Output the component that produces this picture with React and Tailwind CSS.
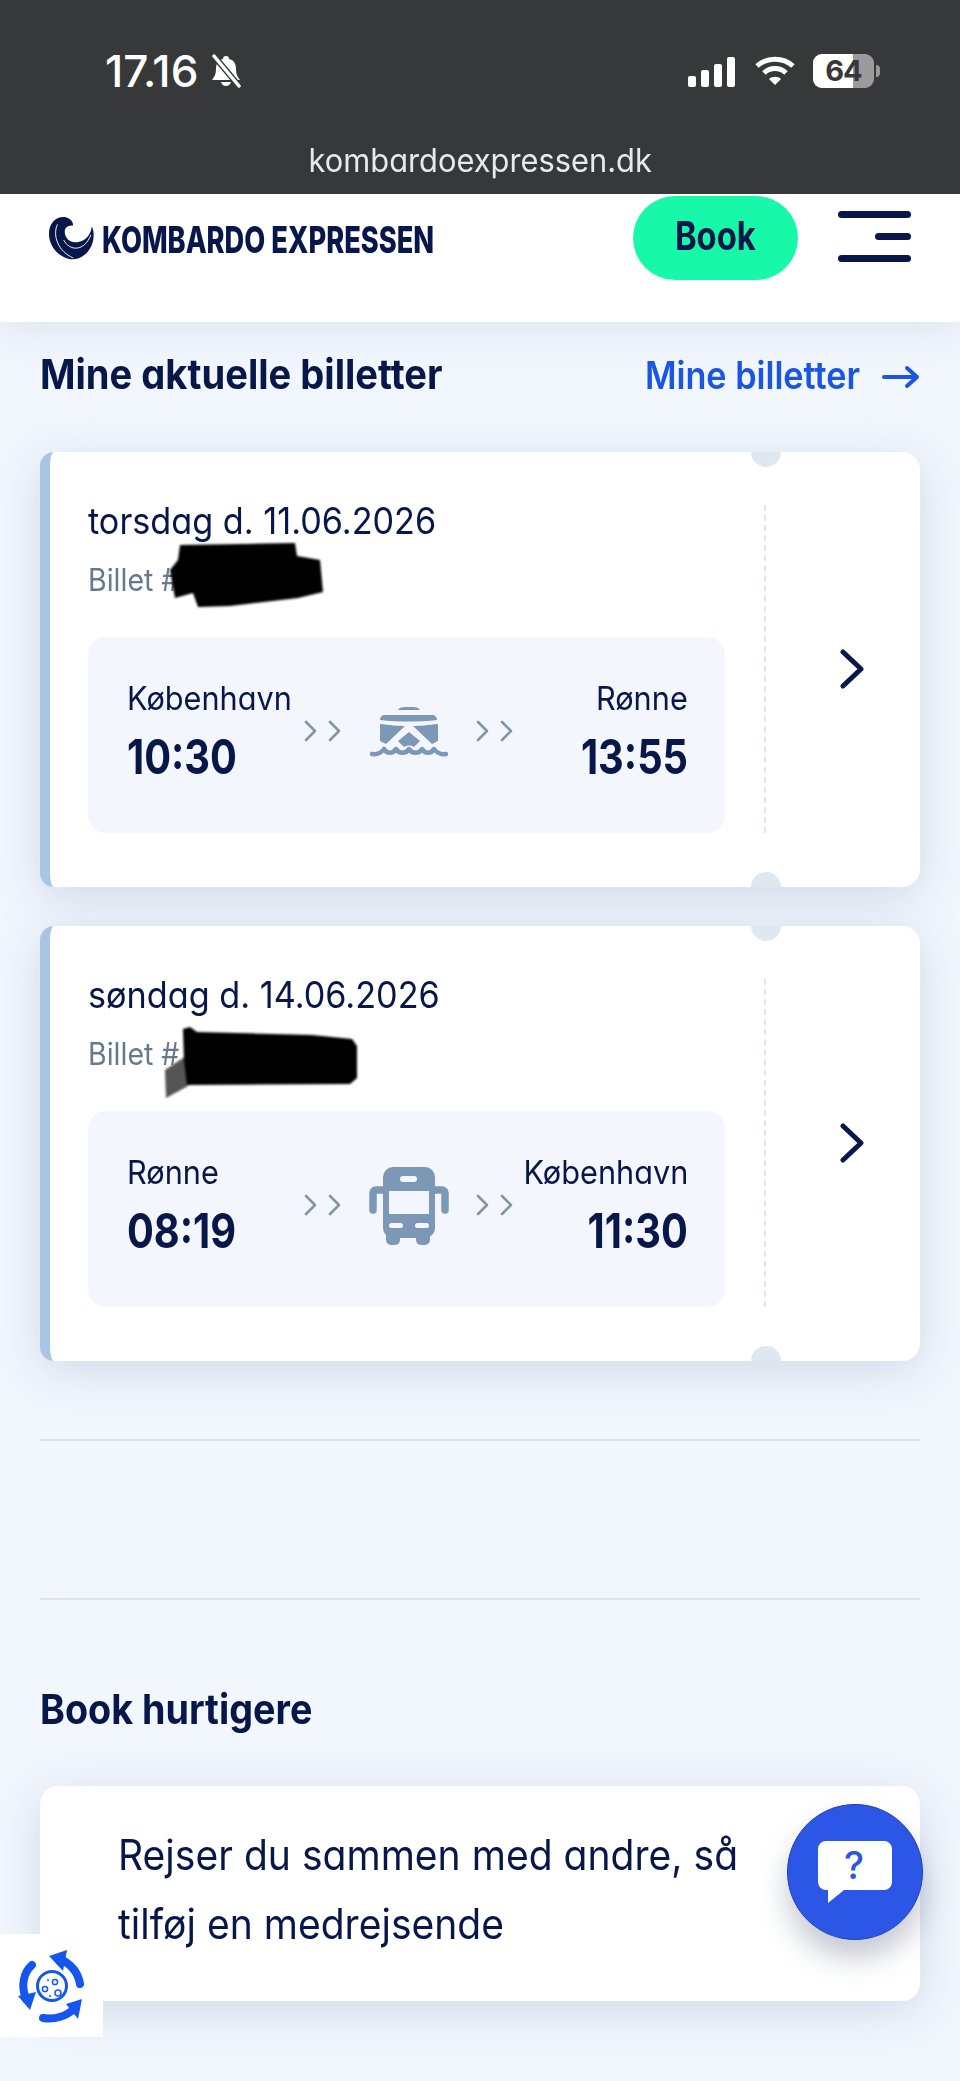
import React from 'react';

function Chevrons() {
  return (
    <svg width="40" height="24" viewBox="0 0 40 24" fill="none" stroke="#8493a6" strokeWidth="2.6" strokeLinecap="round" strokeLinejoin="round">
      <path d="M3 3l9 9-9 9" />
      <path d="M27 3l9 9-9 9" />
    </svg>
  );
}

function Ferry() {
  return (
    <svg width="80" height="54" viewBox="0 0 80 54" fill="#7d97b6">
      <path d="M29 5c2-3 4-3 11-3s9 0 11 3z" />
      <path d="M11 15c0-3 2-5 5-5h47c3 0 5 2 5 5-18 2-39 2-57 0z" />
      <path d="M11 19c9 1 19 2 25 2L17 39l-6-3zM69 19c-9 1-19 2-25 2l19 18 6-3z" />
      <path d="M40 27l11 9-6 6c-3-2-7-2-10 0l-6-6z" />
      <path d="M3 49c6 1 9-1 12-5 3 5 9 5 12 0 3 5 10 5 13 0 3 5 10 5 13 0 3 5 9 5 12 0 3 4 6 6 12 5" fill="none" stroke="#7d97b6" strokeWidth="4.5" strokeLinecap="round" strokeLinejoin="round" />
    </svg>
  );
}

function Bus() {
  return (
    <svg width="80" height="80" viewBox="0 0 80 80" fill="#7d97b6">
      <rect x="14" y="1" width="52" height="71" rx="10" />
      <rect x="17" y="58" width="14" height="21" rx="5" />
      <rect x="47" y="58" width="14" height="21" rx="5" />
      <path d="M15 24H7a3 3 0 0 0-3 3v17M65 24h8a3 3 0 0 1 3 3v17" fill="none" stroke="#7d97b6" strokeWidth="7.5" strokeLinecap="round" />
      <rect x="20" y="25" width="40" height="23" fill="#f3f7fd" />
      <rect x="31" y="10" width="17" height="6" rx="3" fill="#f3f7fd" />
      <rect x="20" y="57" width="14" height="5" rx="2.5" fill="#f3f7fd" />
      <rect x="46" y="57" width="14" height="5" rx="2.5" fill="#f3f7fd" />
    </svg>
  );
}

function Notch({ pos }) {
  return pos === 'top' ? (
    <span className="absolute left-[701px] top-[-15px] w-[30px] h-[30px] rounded-full bg-[#dfe7f1]" />
  ) : (
    <span className="absolute left-[701px] bottom-[-15px] w-[30px] h-[30px] rounded-full bg-[#dfe7f1]" />
  );
}

function Ticket({ date, from, to, dep, arr, icon, blob }) {
  return (
    <div className="relative h-[435px] flex border-l-[10px] border-[#a8c6e4] rounded-l-[14px] rounded-r-[18px] bg-white shadow-[0_10px_44px_rgba(170,186,210,0.45)] overflow-hidden">
      <Notch pos="top" />
      <Notch pos="bottom" />
      <div className="w-[678px] shrink-0 pl-[38px] pt-[46px]">
        <div className="h-[46px] flex items-center text-[37px] text-[#08174a] whitespace-nowrap"><span className="inline-block origin-left scale-x-[0.925]">{date}</span></div>
        <div className="h-[40px] mt-[16px] flex items-center text-[31px] text-[#67798f] whitespace-nowrap"><span className="inline-block origin-left scale-x-[0.92]">Billet #</span></div>
        <div className="mt-[37px] w-[637px] h-[196px] rounded-[18px] bg-[#f3f7fd] pl-[39px] pr-[37px] flex items-start">
          <div className="w-[170px] shrink-0 pt-[42px]">
            <div className="h-[40px] flex items-center text-[33px] text-[#08174a] whitespace-nowrap"><span className="inline-block origin-left scale-x-[0.93]">{from}</span></div>
            <div className="h-[52px] mt-[12px] flex items-center text-[48px] font-bold text-[#08174a] whitespace-nowrap"><span className="inline-block origin-left scale-x-[0.83]">{dep}</span></div>
          </div>
          <div className="shrink-0 ml-[6px] flex items-center h-full">
            <div className="mt-[-9px]"><Chevrons /></div>
            <div className="ml-[26px] w-[80px] flex justify-center mt-[-6px]">{icon}</div>
            <div className="ml-[26px] mt-[-9px]"><Chevrons /></div>
          </div>
          <div className="flex-1 min-w-0 pt-[42px] text-right">
            <div className="h-[40px] flex items-center justify-end text-[33px] text-[#08174a] whitespace-nowrap"><span className="inline-block origin-right scale-x-[0.93]">{to}</span></div>
            <div className="h-[52px] mt-[12px] flex items-center justify-end text-[48px] font-bold text-[#08174a] whitespace-nowrap"><span className="inline-block origin-right scale-x-[0.83]">{arr}</span></div>
          </div>
        </div>
      </div>
      <div className="w-[48px] shrink-0 flex justify-start">
        <div className="ml-[36px] mt-[53px] h-[328px] border-l-2 border-dashed border-[#e1e6ec]" />
      </div>
      <div className="flex-1 flex items-start">
        <svg className="ml-[64px] mt-[197px]" width="24" height="40" viewBox="0 0 24 40" fill="none" stroke="#08174a" strokeWidth="5" strokeLinecap="round" strokeLinejoin="round">
          <path d="M3 3l18 17L3 37" />
        </svg>
      </div>
      {blob}
    </div>
  );
}

export default function App() {
  return (
    <div className="relative w-full h-[2081px] overflow-hidden bg-[#f2f6fd] font-['Inter','Noto_Sans',sans-serif] [font-feature-settings:'cv11']">
      <div className="h-[194px] bg-[#37383a] relative z-10">
        <div className="h-[50px] pt-[54px] box-content flex items-start justify-between pl-[105px] pr-[80px]">
          <div className="flex items-center">
            <div className="w-[94px] h-[34px] flex items-center text-[44px] font-medium text-white whitespace-nowrap"><span className="inline-block origin-left">17.16</span></div>
            <svg className="ml-[10px]" width="34" height="34" viewBox="0 0 34 34" fill="white">
              <path d="M17 2c2 0 3 1 3 3 5 1 7 5 7 10 0 6 2 8 4 11H3c2-3 4-5 4-11 0-5 2-9 7-10 0-2 1-3 3-3z" />
              <path d="M12 28h10c-1 3-3 4-5 4s-4-1-5-4z" />
              <path d="M5 2l25 30" stroke="#37383a" strokeWidth="6" />
              <path d="M5 2l25 30" stroke="white" strokeWidth="3.5" strokeLinecap="round" />
            </svg>
          </div>
          <div className="flex items-center">
            <div className="flex items-end gap-[5px] h-[30px] mt-[2px]">
              <span className="w-[8px] h-[11px] rounded-[2px] bg-white" />
              <span className="w-[8px] h-[17px] rounded-[2px] bg-white" />
              <span className="w-[8px] h-[23px] rounded-[2px] bg-white" />
              <span className="w-[8px] h-[30px] rounded-[2px] bg-white" />
            </div>
            <svg className="ml-[20px]" width="40" height="30" viewBox="0 0 40 30" fill="none" stroke="white" strokeWidth="5">
              <path d="M2 10c10-9 26-9 36 0" />
              <path d="M9 17c6-6 16-6 22 0" />
              <path d="M20 29l-6-6c3-3 9-3 12 0z" fill="white" stroke="none" />
            </svg>
            <div className="ml-[18px] relative w-[61px] h-[34px] rounded-[9px] bg-[#9b9b9d] overflow-hidden">
              <div className="w-[40px] h-full bg-white" />
              <div className="absolute inset-0 flex items-center justify-center text-[29px] font-bold text-[#37383a] tracking-[-1px]">64</div>
            </div>
            <div className="ml-[2px] w-[4px] h-[12px] rounded-r-full bg-[#9b9b9d]" />
          </div>
        </div>
        <div className="h-[40px] mt-[37px] flex items-center justify-center text-[32px] text-[#e9e9e9] whitespace-nowrap"><span className="inline-block scale-x-[0.963]">kombardoexpressen.dk</span></div>
      </div>

      <header className="relative h-[128px] bg-white shadow-[0_8px_36px_rgba(190,200,220,0.4)] flex items-start">
        <div className="ml-[48px] mt-[21px] flex items-center">
          <svg width="46" height="44" viewBox="0 0 44 42" fill="#08174a">
            <path d="M16 1C7 0 0 8 1 19c1 10 8 19 19 22 10 2 20-5 23-17 1-5 1-10-1-14-1 8-6 14-14 15-7 1-12-4-12-10 0-5 4-6 8-6 0-4-3-7-8-8z" />
            <path d="M9 8C4 19 10 34 24 40M15 23c6 11 20 11 26-5" fill="none" stroke="white" strokeWidth="0.9" />
          </svg>
          <div className="ml-[8px] mt-[4px] w-[330px] h-[42px] flex items-center text-[37px] font-extrabold text-[#08174a] whitespace-nowrap"><span className="inline-block origin-left scale-x-[0.735]">KOMBARDO EXPRESSEN</span></div>
        </div>
        <div className="ml-auto mt-[2px] w-[165px] h-[84px] rounded-[42px] bg-[#17f9a8] text-[40px] font-bold text-[#08174a] flex justify-center items-start pt-[10px]"><span className="inline-block scale-x-[0.82]">Book</span></div>
        <div className="ml-[40px] mr-[49px] mt-[17px] w-[73px] flex flex-col items-end gap-[15px]">
          <span className="w-full h-[7px] rounded-full bg-[#08174a]" />
          <span className="w-[36px] h-[7px] rounded-full bg-[#08174a]" />
          <span className="w-full h-[7px] rounded-full bg-[#08174a]" />
        </div>
      </header>

      <main className="px-[40px]">
        <div className="h-[50px] mt-[28px] flex items-center justify-between">
          <div className="text-[41px] font-bold text-[#08174a] whitespace-nowrap"><span className="inline-block origin-left scale-x-[0.93]">Mine aktuelle billetter</span></div>
          <div className="flex items-center text-[38px] font-semibold text-[#1a55e3] whitespace-nowrap">
            <span className="inline-block origin-right scale-x-[0.9]">Mine billetter</span>
            <svg className="ml-[22px] mt-[4px]" width="38" height="24" viewBox="0 0 38 24" fill="none" stroke="#1a55e3" strokeWidth="4" strokeLinecap="round" strokeLinejoin="round">
              <path d="M2 12h33M25 3l10 9-10 9" />
            </svg>
          </div>
        </div>

        <div className="mt-[52px] flex flex-col gap-[39px]">
          <Ticket
            date="torsdag d. 11.06.2026"
            from="København"
            to="Rønne"
            dep="10:30"
            arr="13:55"
            icon={<Ferry />}
            blob={
              <svg className="absolute left-[120px] top-[88px] blur-[1px]" width="160" height="72" viewBox="0 0 160 72" fill="#000">
                <path d="M10 5l115-2 2 13 23 4 3 32-25 6-68 8-32 1-5-14-18 5-5-28 8-10z" />
              </svg>
            }
          />
          <Ticket
            date="søndag d. 14.06.2026"
            from="Rønne"
            to="København"
            dep="08:19"
            arr="11:30"
            icon={<Bus />}
            blob={
              <svg className="absolute left-[112px] top-[100px] blur-[1px]" width="210" height="76" viewBox="0 0 210 76" fill="#000">
                <path d="M3 44l21-14 2 30-22 12z" fill="#555" />
                <path d="M21 3l7-2 7 5 115 3 40 4 5 7v32l-7 6-163 1-3-24z" />
              </svg>
            }
          />
        </div>

        <div className="mt-[78px] h-[2px] bg-[#dbe5f2]" />
        <div className="mt-[157px] h-[2px] bg-[#dbe5f2]" />

        <div className="mt-[86px] h-[48px] flex items-center text-[41px] font-bold text-[#08174a] whitespace-nowrap"><span className="inline-block origin-left scale-x-[0.92]">Book hurtigere</span></div>

        <div className="mt-[52px] h-[215px] rounded-[18px] bg-white shadow-[0_10px_44px_rgba(170,186,210,0.45)] pl-[78px] pt-[34px] text-[42px] leading-[69px] text-[#08174a] whitespace-nowrap">
          <div><span className="inline-block origin-left scale-x-[0.93]">Rejser du sammen med andre, så</span></div>
          <div><span className="inline-block origin-left scale-x-[0.93]">tilføj en medrejsende</span></div>
        </div>
      </main>

      <button className="absolute left-[787px] top-[1804px] w-[136px] h-[136px] rounded-full bg-[#2c57e6] border border-[#1f3fb5] shadow-[0_18px_28px_rgba(90,100,130,0.35)] flex items-center justify-center">
        <svg width="76" height="64" viewBox="0 0 76 64">
          <path d="M9 1h58a8 8 0 0 1 8 8v33a8 8 0 0 1-8 8H27L11 63V50H9a8 8 0 0 1-8-8V9a8 8 0 0 1 8-8z" fill="white" />
          <text x="37" y="39" textAnchor="middle" fontSize="38" fontFamily="Inter" fontWeight="500" fill="#2c57e6">?</text>
        </svg>
      </button>

      <div className="absolute left-0 top-[1934px] w-[103px] h-[103px] bg-white flex items-center justify-center">
        <svg width="80" height="80" viewBox="0 0 80 80" fill="none">
          <circle cx="40" cy="40" r="14.5" stroke="#1557ee" strokeWidth="3" />
          <circle cx="33" cy="43" r="2.6" stroke="#1557ee" strokeWidth="1.5" />
          <circle cx="43" cy="36" r="2.6" stroke="#1557ee" strokeWidth="1.5" />
          <circle cx="46" cy="47" r="3" stroke="#1557ee" strokeWidth="1.5" />
          <circle cx="36" cy="34" r="1" fill="#1557ee" />
          <circle cx="38" cy="50" r="1" fill="#1557ee" />
          <g stroke="#1557ee" strokeWidth="8" strokeLinecap="round">
            <path d="M68 38C66 26 59 18 48 13" />
            <path d="M31 72c12 2 24-2 32-10" />
            <path d="M20 19C11 27 9 40 14 53" />
          </g>
          <g fill="#1557ee">
            <path d="M37 10l18-6-4 21z" />
            <path d="M54 58l16-5-4 20z" />
            <path d="M6 50l18-4-6 18z" />
          </g>
        </svg>
      </div>
    </div>
  );
}
